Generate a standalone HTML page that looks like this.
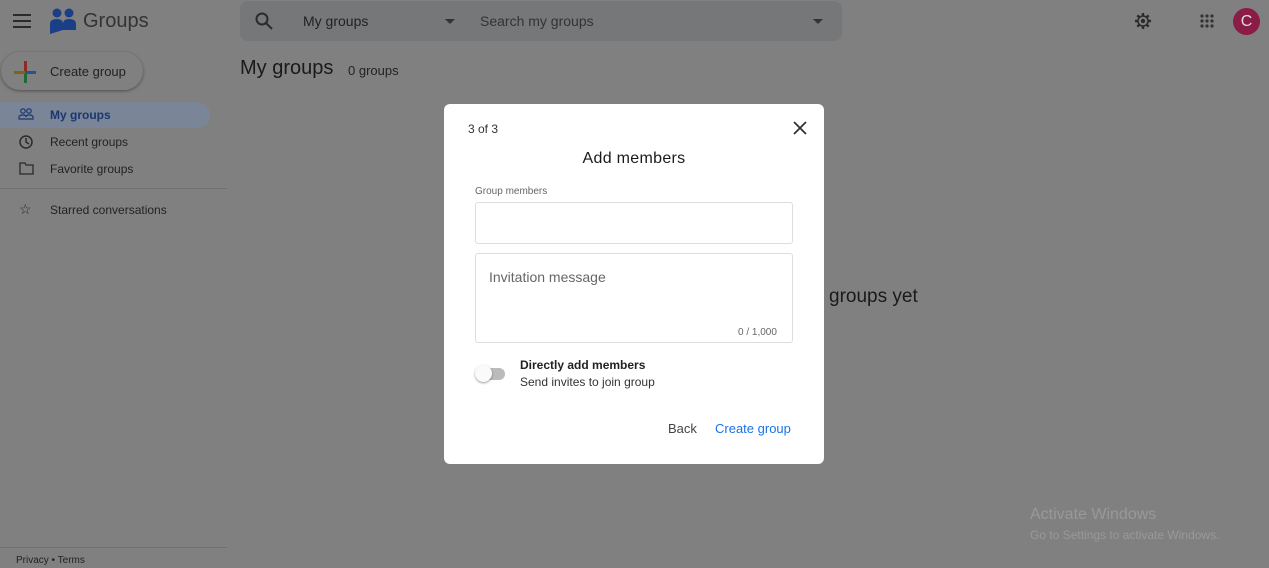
<!DOCTYPE html>
<html><head><style>
body{margin:0;width:1269px;height:568px;overflow:hidden;background:#808080;font-family:"Liberation Sans",Arial,sans-serif;position:relative;color:#1a1a1a}
.a{position:absolute}
</style></head><body>
<svg class="a" style="left:13px;top:13px" width="20" height="16"><rect y="1" width="18" height="2" fill="#2b2b2b"/><rect y="7" width="18" height="2" fill="#2b2b2b"/><rect y="13" width="18" height="2" fill="#2b2b2b"/></svg>
<svg class="a" style="left:49px;top:8px" width="28" height="26"><circle cx="8" cy="5" r="4.5" fill="#1b3f86"/><circle cx="20" cy="5" r="4.5" fill="#1b3f86"/><path d="M1 26 L1 16 Q1 11 8 11 Q14 11 14 16 Q14 11 20 11 Q27 11 27 16 L27 22 L14 22 L1 26Z" fill="#1b3f86"/></svg>
<div class="a" style="left:83px;top:10px;font-size:20px;color:#333">Groups</div>
<div class="a" style="left:240px;top:1px;width:602px;height:40px;background:#767778;border-radius:8px"></div>
<svg class="a" style="left:255px;top:12px" width="18" height="18"><circle cx="7" cy="7" r="5.5" stroke="#2b2b2b" stroke-width="2" fill="none"/><path d="M11 11L17 17" stroke="#2b2b2b" stroke-width="2"/></svg>
<div class="a" style="left:303px;top:13px;font-size:14px;color:#222">My groups</div>
<div class="a" style="left:445px;top:19px;border:5px solid transparent;border-top-color:#333"></div>
<div class="a" style="left:480px;top:13px;font-size:14px;color:#333">Search my groups</div>
<div class="a" style="left:813px;top:19px;border:5px solid transparent;border-top-color:#333"></div>
<svg class="a" style="left:1134px;top:12px" width="18" height="18" viewBox="0 0 18 18"><g stroke="#2b2b2b" stroke-width="2.4"><path d="M9 1V17M1 9H17M3.3 3.3L14.7 14.7M14.7 3.3L3.3 14.7"/></g><circle cx="9" cy="9" r="5.8" fill="#2b2b2b"/><circle cx="9" cy="9" r="4.3" fill="#808080"/><circle cx="9" cy="9" r="2.2" fill="#2b2b2b"/></svg>
<svg class="a" style="left:1200px;top:14px" width="14" height="14" fill="#333"><circle cx="2" cy="2" r="1.6"/><circle cx="7" cy="2" r="1.6"/><circle cx="12" cy="2" r="1.6"/><circle cx="2" cy="7" r="1.6"/><circle cx="7" cy="7" r="1.6"/><circle cx="12" cy="7" r="1.6"/><circle cx="2" cy="12" r="1.6"/><circle cx="7" cy="12" r="1.6"/><circle cx="12" cy="12" r="1.6"/></svg>
<div class="a" style="left:1233px;top:8px;width:27px;height:27px;border-radius:50%;background:#8a1c46;color:#ddd;font-size:16px;text-align:center;line-height:27px">C</div>
<div class="a" style="left:1px;top:52px;width:142px;height:38px;border-radius:20px;background:#808080;box-shadow:0 1px 3px rgba(0,0,0,.4)"></div>
<svg class="a" style="left:14px;top:61px" width="22" height="22"><rect x="10" y="0" width="3" height="11" fill="#8c2b22"/><rect x="10" y="11" width="3" height="11" fill="#1e6a35"/><rect x="0" y="10" width="11" height="3" fill="#7d6515"/><rect x="12" y="10" width="10" height="3" fill="#2a4f93"/></svg>
<div class="a" style="left:50px;top:64px;font-size:13px;color:#222">Create group</div>
<div class="a" style="left:0;top:102px;width:210px;height:26px;background:#7a8597;border-radius:0 13px 13px 0"></div>
<svg class="a" style="left:18px;top:108px" width="16" height="12"><circle cx="5" cy="3" r="2.2" stroke="#1b3670" stroke-width="1.2" fill="none"/><circle cx="11" cy="3" r="2.2" stroke="#1b3670" stroke-width="1.2" fill="none"/><path d="M1 11V9Q1 7 5 7Q8 7 8 9Q8 7 11 7Q15 7 15 9V11Z" stroke="#1b3670" stroke-width="1.2" fill="none"/></svg>
<div class="a" style="left:50px;top:108px;font-size:12px;font-weight:bold;color:#1b3670">My groups</div>
<svg class="a" style="left:19px;top:135px" width="14" height="14"><circle cx="7" cy="7" r="6" stroke="#2b2b2b" stroke-width="1.5" fill="none"/><path d="M7 3V7L10 9" stroke="#2b2b2b" stroke-width="1.5" fill="none"/></svg>
<div class="a" style="left:50px;top:135px;font-size:12px;color:#222">Recent groups</div>
<svg class="a" style="left:19px;top:162px" width="15" height="13"><path d="M1 1H6L7 3H14V12H1Z" stroke="#2b2b2b" stroke-width="1.3" fill="none"/></svg>
<div class="a" style="left:50px;top:162px;font-size:12px;color:#222">Favorite groups</div>
<div class="a" style="left:0;top:188px;width:227px;height:1px;background:#707070"></div>
<div class="a" style="left:19px;top:201px;font-size:14px;color:#2b2b2b">☆</div>
<div class="a" style="left:50px;top:203px;font-size:12px;color:#222">Starred conversations</div>
<div class="a" style="left:0;top:547px;width:227px;height:1px;background:#707070"></div>
<div class="a" style="left:16px;top:555px;font-size:10px;color:#222">Privacy • Terms</div>
<div class="a" style="left:240px;top:57px;font-size:20px;color:#1a1a1a">My groups</div>
<div class="a" style="left:348px;top:63px;font-size:13px;color:#222">0 groups</div>
<div class="a" style="left:829px;top:286px;font-size:19px;color:#1a1a1a;white-space:nowrap">groups yet</div>
<div class="a" style="left:1030px;top:506px;font-size:16px;color:#999">Activate Windows</div>
<div class="a" style="left:1030px;top:528px;font-size:12px;color:#999">Go to Settings to activate Windows.</div>
<div class="a" style="left:444px;top:104px;width:380px;height:360px;background:#fff;border-radius:6px"></div>
<div class="a" style="left:468px;top:122px;font-size:12px;color:#333">3 of 3</div>
<svg class="a" style="left:793px;top:121px" width="14" height="14"><path d="M1 1L13 13M13 1L1 13" stroke="#333" stroke-width="1.8"/></svg>
<div class="a" style="left:444px;top:150px;width:380px;text-align:center;font-size:16px;color:#1a1a1a;letter-spacing:0.3px">Add members</div>
<div class="a" style="left:475px;top:186px;font-size:10px;color:#666">Group members</div>
<div class="a" style="left:475px;top:202px;width:316px;height:40px;border:1px solid #ddd;border-radius:3px"></div>
<div class="a" style="left:475px;top:253px;width:316px;height:88px;border:1px solid #ddd;border-radius:3px"></div>
<div class="a" style="left:489px;top:269px;font-size:14px;color:#666">Invitation message</div>
<div class="a" style="left:738px;top:327px;font-size:10px;color:#666">0 / 1,000</div>
<div class="a" style="left:477px;top:368px;width:28px;height:12px;border-radius:6px;background:#bbb"></div>
<div class="a" style="left:475px;top:365px;width:17px;height:17px;border-radius:50%;background:#fafafa;box-shadow:0 1px 2px rgba(0,0,0,.4)"></div>
<div class="a" style="left:520px;top:358px;font-size:12px;color:#222;font-weight:bold">Directly add members</div>
<div class="a" style="left:520px;top:375px;font-size:12px;color:#333">Send invites to join group</div>
<div class="a" style="left:668px;top:421px;font-size:13px;color:#444">Back</div>
<div class="a" style="left:715px;top:421px;font-size:13px;color:#1a73e8">Create group</div>
</body></html>
